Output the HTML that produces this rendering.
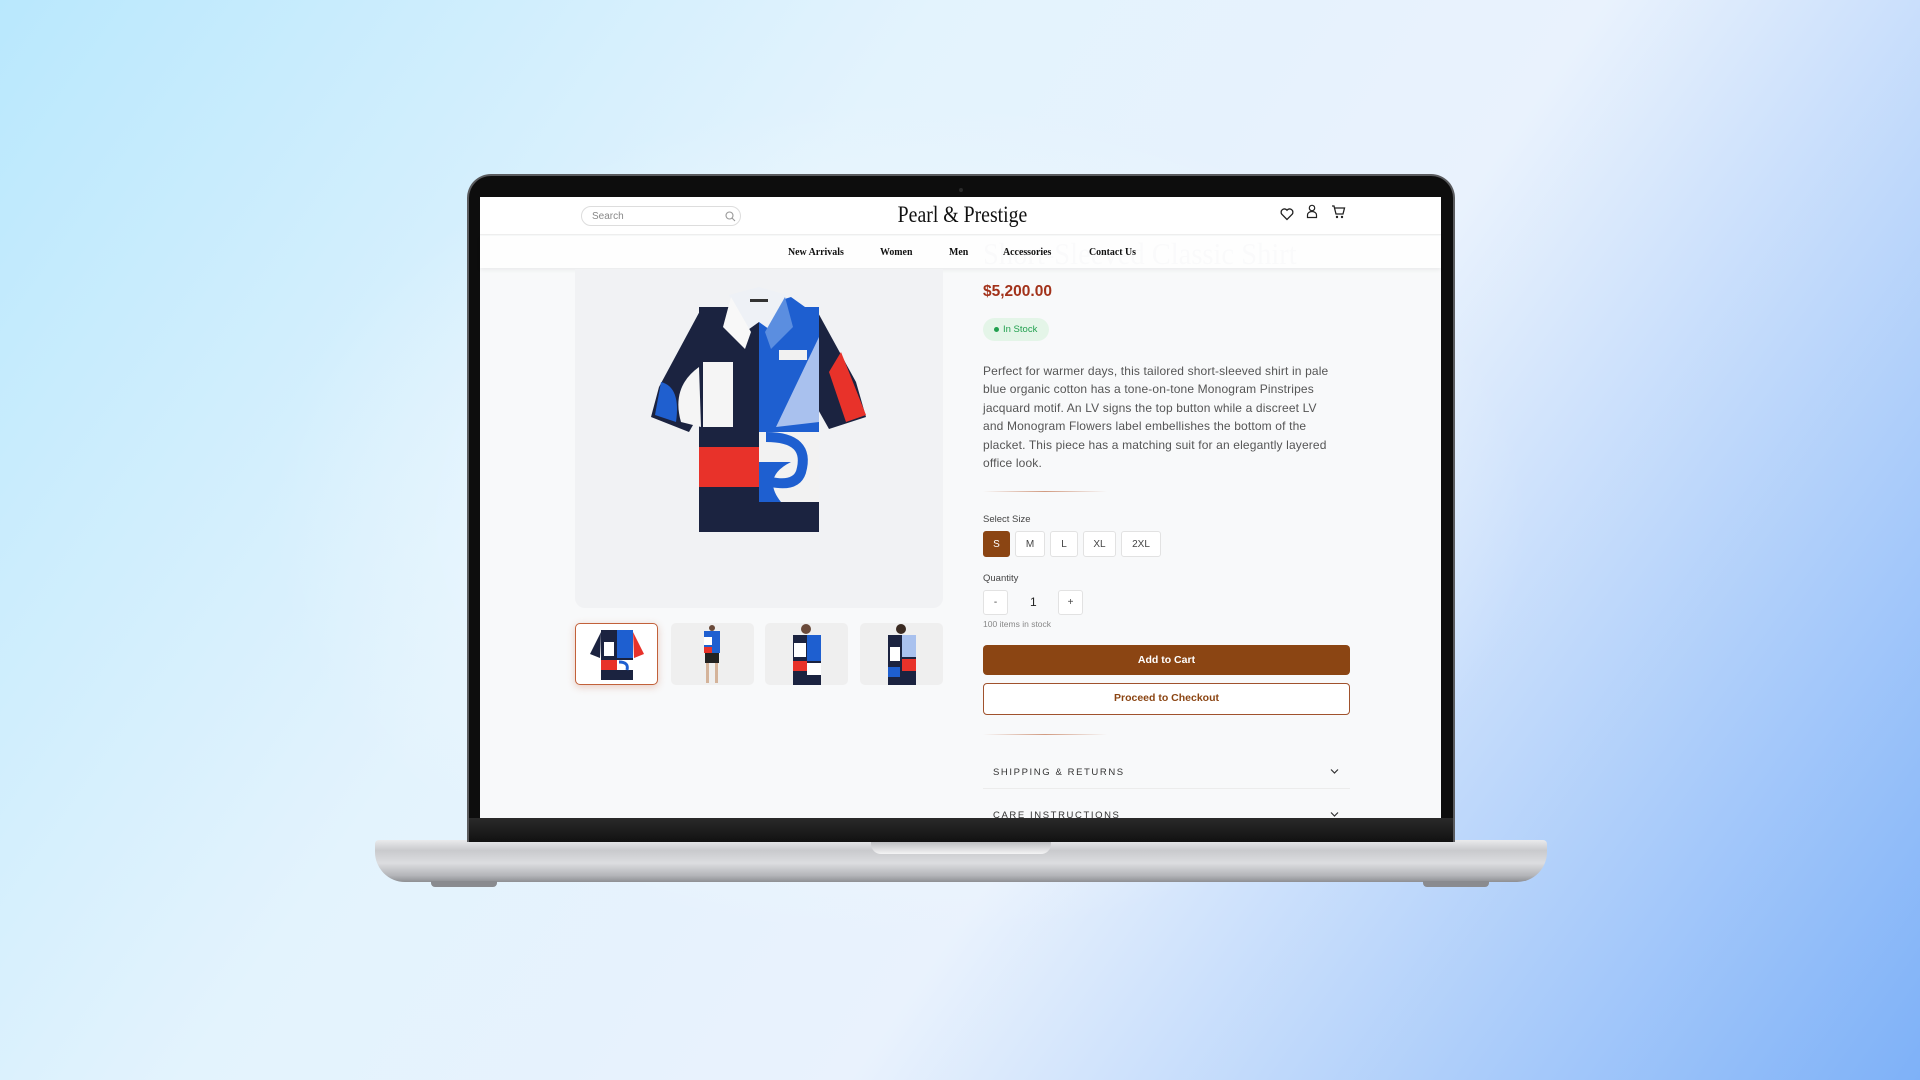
<!DOCTYPE html>
<html><head><meta charset="utf-8"><style>
*{margin:0;padding:0;box-sizing:border-box}
body{width:1920px;height:1080px;overflow:hidden;position:relative;font-family:"Liberation Sans",sans-serif;
background:radial-gradient(ellipse 900px 600px at 900px 520px,rgba(245,250,255,.95),rgba(245,250,255,0) 70%),linear-gradient(125deg,#b9e8fd 0%,#e3f3fd 35%,#e9f2fd 60%,#7eb1f8 100%)}
.a{position:absolute}
.serif{font-family:"Liberation Serif",serif}
.sz{position:absolute;top:531px;height:26px;border:1px solid #e2e2e2;border-radius:3px;background:#fff;font-size:10px;color:#444;display:flex;align-items:center;justify-content:center}
.th{position:absolute;top:623px;width:83px;height:62px;background:#efefef;border-radius:5px;overflow:hidden}
.acc{position:absolute;left:993px;font-size:9.5px;letter-spacing:1.6px;color:#333}
</style></head><body>
<div class="a" style="left:375px;top:840px;width:1172px;height:42px;border-radius:4px 4px 30px 30px;background:linear-gradient(#e9eaec 0%,#c9cacd 25%,#dcdde0 55%,#b3b4b8 85%,#8e8f93 100%)"></div>
<div class="a" style="left:871px;top:842px;width:180px;height:12px;border-radius:0 0 10px 10px;background:linear-gradient(#bdbec1,#f4f4f5)"></div>
<div class="a" style="left:431px;top:881px;width:66px;height:6px;border-radius:0 0 4px 4px;background:#8a8b8f"></div>
<div class="a" style="left:1423px;top:881px;width:66px;height:6px;border-radius:0 0 4px 4px;background:#8a8b8f"></div>
<div class="a" style="left:467px;top:174px;width:988px;height:668px;border-radius:24px 24px 0 0;background:#0d0d0d;border:2px solid #5a5b5e;border-bottom:none"></div>
<div class="a" style="left:959px;top:188px;width:4px;height:4px;border-radius:50%;background:#2a2a2a"></div>
<div class="a" style="left:480px;top:197px;width:961px;height:621px;background:#f8f9fa;overflow:hidden"></div>
<div class="a" style="left:480px;top:197px;width:961px;height:38px;background:#fff;border-bottom:1px solid #eee"></div>
<div class="a" style="left:581px;top:206px;width:160px;height:20px;border:1px solid #ddd;border-radius:10px;background:#fff;font-size:10px;color:#888;padding:4px 0 0 10px">Search
<svg class="a" style="left:143px;top:4px" width="11" height="11" viewBox="0 0 11 11"><circle cx="4.5" cy="4.5" r="3.5" fill="none" stroke="#999" stroke-width="1.1"/><path d="M7 7l3 3" stroke="#999" stroke-width="1.1"/></svg></div>
<div class="a serif" style="left:840px;top:202px;width:245px;text-align:center;font-size:23px;color:#111;transform:scaleX(.86)">Pearl &amp; Prestige</div>
<svg class="a" style="left:1280px;top:207px" width="14" height="14" viewBox="0 0 14 14"><path d="M7 12.5L1.8 7.2A3 3 0 0 1 7 3.2a3 3 0 0 1 5.2 4z" fill="none" stroke="#222" stroke-width="1.3"/></svg>
<svg class="a" style="left:1306px;top:204px" width="12" height="15" viewBox="0 0 12 15"><circle cx="6" cy="4" r="2.7" fill="none" stroke="#222" stroke-width="1.2"/><path d="M1.5 13.5V11a4.5 3.5 0 0 1 9 0v2.5z" fill="none" stroke="#222" stroke-width="1.2"/></svg>
<svg class="a" style="left:1331px;top:204px" width="15" height="15" viewBox="0 0 15 15"><path d="M1 2h2l2 8h7l1.5-6H4" fill="none" stroke="#222" stroke-width="1.3"/><circle cx="6" cy="13" r="1.2" fill="#222"/><circle cx="11" cy="13" r="1.2" fill="#222"/></svg>
<div class="a serif" style="left:983px;top:236px;font-size:31px;color:#e6e7e9;white-space:nowrap;transform:scaleX(.92);transform-origin:left">Short-Sleeved Classic Shirt</div>
<div class="a" style="left:480px;top:236px;width:961px;height:32px;background:rgba(255,255,255,.8);box-shadow:0 2px 4px rgba(0,0,0,.06)"></div>
<div class="a serif" style="top:246px;left:788px;font-size:11px;font-weight:bold;color:#111;white-space:nowrap;transform:scaleX(.9);transform-origin:left">New Arrivals</div>
<div class="a serif" style="top:246px;left:880px;font-size:11px;font-weight:bold;color:#111;transform:scaleX(.9);transform-origin:left">Women</div>
<div class="a serif" style="top:246px;left:949px;font-size:11px;font-weight:bold;color:#111;transform:scaleX(.9);transform-origin:left">Men</div>
<div class="a serif" style="top:246px;left:1003px;font-size:11px;font-weight:bold;color:#111;transform:scaleX(.9);transform-origin:left">Accessories</div>
<div class="a serif" style="top:246px;left:1089px;font-size:11px;font-weight:bold;color:#111;white-space:nowrap;transform:scaleX(.9);transform-origin:left">Contact Us</div>
<div class="a" style="left:575px;top:269px;width:368px;height:339px;background:#f1f2f4;border-radius:0 0 10px 10px"></div>
<svg class="a" style="left:651px;top:287px" width="215" height="247" viewBox="0 0 215 247">
<polygon points="50,22 8,100 0,130 38,145 58,110" fill="#1b2340"/>
<path d="M10,95 Q30,100 25,135 L4,128z" fill="#1f5fcf"/>
<polygon points="165,22 205,95 215,130 178,142 160,110" fill="#1b2340"/>
<polygon points="190,65 215,128 195,135 178,85" fill="#e8322a"/>
<rect x="48" y="20" width="60" height="225" fill="#1b2340"/>
<rect x="108" y="20" width="60" height="225" fill="#1e5fd0"/>
<rect x="52" y="75" width="30" height="65" fill="#f5f5f5"/>
<rect x="82" y="75" width="26" height="65" fill="#1b2340"/>
<polygon points="108,20 140,10 168,30 168,110 125,140 108,140" fill="#1e5fd0"/>
<polygon points="168,50 168,135 125,140" fill="#a9c1ee"/>
<rect x="128" y="63" width="28" height="10" fill="#f1f1f1"/>
<rect x="48" y="160" width="60" height="40" fill="#e8322a"/>
<rect x="48" y="200" width="60" height="45" fill="#1b2340"/>
<path d="M108,145 H168 V215 H130 Q110,190 140,175 H108z" fill="#f2f2f2"/>
<path d="M115,150 Q160,150 150,185 Q145,200 120,195" fill="none" stroke="#1e5fd0" stroke-width="10"/>
<rect x="108" y="215" width="60" height="30" fill="#1b2340"/>
<path d="M48,80 Q20,100 30,135 L50,140z" fill="#f5f5f5"/>
<polygon points="78,8 108,0 136,8 122,45 108,35 94,45" fill="#eef1f6"/>
<polygon points="80,10 72,40 94,62 100,45" fill="#f8f8f8"/>
<polygon points="134,10 142,40 120,62 114,45" fill="#5b8ee0"/>
<rect x="99" y="12" width="18" height="3" fill="#333"/>
</svg>
<div class="th" style="left:575px;border:1.5px solid #c2613a;box-shadow:0 2px 8px rgba(194,97,58,.3);background:#fff">
<svg width="83" height="62" viewBox="0 0 83 62"><rect x="25" y="6" width="32" height="50" fill="#1b2340"/><polygon points="25,8 14,30 24,34" fill="#1b2340"/><polygon points="57,8 68,30 58,34" fill="#e8322a"/><rect x="41" y="6" width="16" height="28" fill="#1e5fd0"/><rect x="28" y="18" width="10" height="14" fill="#fff"/><rect x="25" y="36" width="16" height="10" fill="#e8322a"/><rect x="41" y="36" width="16" height="10" fill="#fff"/><path d="M43 38q10 0 8 8" stroke="#1e5fd0" stroke-width="3" fill="none"/></svg></div>
<div class="th" style="left:671px"><svg width="83" height="62" viewBox="0 0 83 62"><rect x="33" y="8" width="16" height="22" fill="#1e5fd0"/><rect x="33" y="14" width="8" height="8" fill="#fff"/><rect x="33" y="24" width="8" height="6" fill="#e8322a"/><rect x="34" y="30" width="14" height="10" fill="#222"/><rect x="35" y="40" width="3" height="20" fill="#d4b39a"/><rect x="44" y="40" width="3" height="20" fill="#d4b39a"/><circle cx="41" cy="5" r="3" fill="#6a4a3a"/></svg></div>
<div class="th" style="left:765px"><svg width="83" height="62" viewBox="0 0 83 62"><circle cx="41" cy="6" r="5" fill="#6a4a3a"/><rect x="28" y="12" width="28" height="50" fill="#1b2340"/><rect x="42" y="12" width="14" height="26" fill="#1e5fd0"/><rect x="29" y="20" width="12" height="14" fill="#fff"/><rect x="28" y="38" width="14" height="10" fill="#e8322a"/><rect x="42" y="40" width="14" height="12" fill="#fff"/></svg></div>
<div class="th" style="left:860px"><svg width="83" height="62" viewBox="0 0 83 62"><circle cx="41" cy="6" r="5" fill="#3a2a22"/><rect x="28" y="12" width="28" height="50" fill="#1b2340"/><rect x="42" y="12" width="14" height="22" fill="#a9c1ee"/><rect x="30" y="24" width="10" height="14" fill="#fff"/><rect x="42" y="36" width="14" height="12" fill="#e8322a"/><rect x="28" y="44" width="12" height="10" fill="#1e5fd0"/></svg></div>
<div class="a" style="left:983px;top:283px;font-size:15.5px;font-weight:bold;color:#a2321a">$5,200.00</div>
<div class="a" style="left:983px;top:318px;width:66px;height:23px;border-radius:12px;background:#e4f5e8;font-size:9.5px;color:#22a04f;padding:6px 0 0 20px">In Stock</div>
<div class="a" style="left:994px;top:327px;width:5px;height:5px;border-radius:50%;background:#22a04f"></div>
<div class="a" style="left:983px;top:362px;width:352px;font-size:12px;letter-spacing:.15px;line-height:18.4px;color:#555">Perfect for warmer days, this tailored short-sleeved shirt in pale blue organic cotton has a tone-on-tone Monogram Pinstripes jacquard motif. An LV signs the top button while a discreet LV and Monogram Flowers label embellishes the bottom of the placket. This piece has a matching suit for an elegantly layered office look.</div>
<div class="a" style="left:983px;top:491px;width:124px;height:1px;background:linear-gradient(90deg,transparent,#d19a80,transparent)"></div>
<div class="a" style="left:983px;top:514px;font-size:9.5px;color:#444">Select Size</div>
<div class="sz" style="left:983px;width:27px;background:#8b4513;border-color:#8b4513;color:#fff">S</div>
<div class="sz" style="left:1015px;width:30px">M</div>
<div class="sz" style="left:1050px;width:28px">L</div>
<div class="sz" style="left:1083px;width:33px">XL</div>
<div class="sz" style="left:1121px;width:40px">2XL</div>
<div class="a" style="left:983px;top:573px;font-size:9.5px;color:#444">Quantity</div>
<div class="sz" style="left:983px;top:590px;width:25px;height:25px">-</div>
<div class="a" style="left:1030px;top:595px;font-size:12px;color:#222">1</div>
<div class="sz" style="left:1058px;top:590px;width:25px;height:25px">+</div>
<div class="a" style="left:983px;top:619px;font-size:8.5px;color:#888">100 items in stock</div>
<div class="a" style="left:983px;top:645px;width:367px;height:30px;background:#8b4513;border-radius:4px;color:#fff;font-size:10.5px;font-weight:bold;text-align:center;line-height:30px">Add to Cart</div>
<div class="a" style="left:983px;top:683px;width:367px;height:32px;border:1.5px solid #a0522d;border-radius:4px;background:#fff;color:#8b4513;font-size:10.5px;font-weight:bold;text-align:center;line-height:29px">Proceed to Checkout</div>
<div class="a" style="left:983px;top:734px;width:124px;height:1px;background:linear-gradient(90deg,transparent,#d19a80,transparent)"></div>
<div class="acc" style="top:767px">SHIPPING &amp; RETURNS</div>
<svg class="a" style="left:1330px;top:768px" width="9" height="7" viewBox="0 0 9 7"><path d="M1 1.5l3.5 3.5 3.5-3.5" fill="none" stroke="#333" stroke-width="1.2"/></svg>
<div class="a" style="left:983px;top:788px;width:367px;height:1px;background:#ececec"></div>
<div class="acc" style="top:810px">CARE INSTRUCTIONS</div>
<svg class="a" style="left:1330px;top:811px" width="9" height="7" viewBox="0 0 9 7"><path d="M1 1.5l3.5 3.5 3.5-3.5" fill="none" stroke="#333" stroke-width="1.2"/></svg>
<div class="a" style="left:469px;top:818px;width:984px;height:24px;background:linear-gradient(#2a2a2a,#111)"></div>
</body></html>
